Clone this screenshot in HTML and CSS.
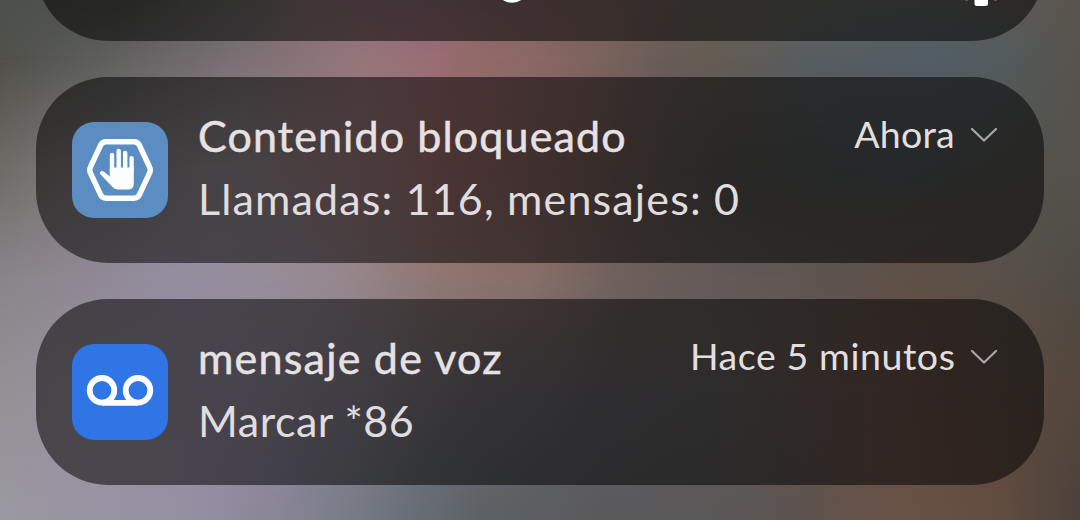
FILE: index.html
```html
<!DOCTYPE html>
<html lang="es">
<head>
<meta charset="utf-8">
<title>Notificaciones</title>
<link rel="stylesheet" href="styles.css">
</head>
<body>
<div class="screen">
  <div class="wall wall-1"></div>
  <div class="wall wall-2"></div>
  <div class="wall wall-3"></div>
  <div class="wall wall-4"></div>
  <div class="wall wall-5"></div>
  <div class="wall wall-6"></div>
  <main class="shade">
    <section class="card card-cut">
      <svg class="cut-marks" width="1008" height="12" viewBox="36 0 1008 12">
        <ellipse cx="512" cy="-4" rx="11" ry="6.8" fill="#fff"/>
        <rect x="974.5" y="-6" width="13.5" height="12" rx="2.5" fill="#fff"/>
        <path d="M965.5 0h2M994.500 0h2" stroke="#aaa" stroke-width="1"/>
      </svg>
    </section>
    <section class="card">
      <svg class="app-icon" viewBox="0 0 96 96">
        <rect width="96" height="96" rx="22" fill="#5b8cc2"/>
        <path d="M34 19.800H62Q65.500 19.800 67.200 22.800L77.300 44.500Q79.300 48 77.300 51.500L67.200 73.200Q65.500 76.200 62 76.200H34Q30.500 76.200 28.800 73.200L18.700 51.500Q16.700 48 18.700 44.500L28.800 22.800Q30.500 19.800 34 19.800Z" fill="none" stroke="#fcfeff" stroke-width="5.400"/>
        <path d="M40 33V50M46.700 29V50M53.200 31V50M59.600 36.300V50" fill="none" stroke="#fcfeff" stroke-width="4.400" stroke-linecap="round"/>
        <path d="M37.800 45.500H61.800V62Q61.800 67.400 56.500 67.400H45.500Q42.500 67.400 40.500 65L28.600 52.500C26.800 50.200 29.500 47.800 31.800 49.500L37.800 54.500Z" fill="#fcfeff"/>
      </svg>
      <div class="content">
        <header class="head">
          <h2 class="title"><span class="t1">Contenido bloqueado</span></h2>
          <time class="when w1">Ahora</time>
          <svg class="chevron" viewBox="0 0 28 16"><path d="M2 2L14 13.500L26 2"/></svg>
        </header>
        <p class="body b1">Llamadas: 116, mensajes: 0</p>
      </div>
    </section>
    <section class="card">
      <svg class="app-icon" viewBox="0 0 96 96">
        <rect width="96" height="96" rx="22" fill="#2f75e5"/>
        <g fill="none" stroke="#fcfeff" stroke-width="5.800">
          <circle cx="30" cy="46.300" r="12.300"/>
          <circle cx="66" cy="46.300" r="12.300"/>
          <path d="M30 58.900H66"/>
        </g>
      </svg>
      <div class="content">
        <header class="head">
          <h2 class="title"><span class="t2">mensaje de voz</span></h2>
          <time class="when w2">Hace 5 minutos</time>
          <svg class="chevron" viewBox="0 0 28 16"><path d="M2 2L14 13.500L26 2"/></svg>
        </header>
        <p class="body b2">Marcar *86</p>
      </div>
    </section>
  </main>
</div>
</body>
</html>
```

FILE: styles.css
```css
* { box-sizing: border-box; }
body { margin: 0; background: #555; font-family: Lato, "Open Sans", sans-serif; }
.screen { display: grid; width: 1080px; height: 520px; overflow: hidden; }
.wall, .shade { grid-area: 1 / 1; min-height: 0; }

/* Wallpaper: horizontal colour bands faded into each other from top to bottom */
.wall-1 { background: linear-gradient(90deg, rgb(76,80,76) 0, rgb(80,80,78) 120px, rgb(105,105,102) 240px, rgb(136,112,115) 310px, rgb(140,108,122) 400px, rgb(125,100,98) 540px, rgb(118,96,91) 620px, rgb(100,96,88) 720px, rgb(94,97,94) 840px, rgb(92,92,90) 960px, rgb(92,86,78) 1080px); }
.wall-2 {
  background: linear-gradient(90deg, rgb(80,80,72) 0, rgb(88,89,86) 60px, rgb(98,98,97) 120px, rgb(124,112,117) 240px, rgb(148,118,122) 360px, rgb(154,108,114) 440px, rgb(146,106,104) 480px, rgb(138,103,102) 540px, rgb(122,99,92) 600px, rgb(106,92,88) 660px, rgb(99,92,83) 720px, rgb(88,93,95) 800px, rgb(82,93,101) 930px, rgb(82,92,93) 1000px, rgb(88,84,76) 1080px);
  mask-image: linear-gradient(transparent 0, #000 59px);
}
.wall-3 {
  background: linear-gradient(90deg, rgb(110,108,102) 0, rgb(125,119,119) 60px, rgb(148,142,147) 220px, rgb(158,125,129) 360px, rgb(158,113,113) 430px, rgb(133,100,96) 540px, rgb(98,88,84) 660px, rgb(84,84,82) 740px, rgb(80,86,88) 900px, rgb(83,83,80) 1000px, rgb(84,82,74) 1080px);
  mask-image: linear-gradient(transparent 59px, #000 170px);
}
.wall-4 {
  background: linear-gradient(90deg, rgb(138,133,138) 0, rgb(143,135,145) 60px, rgb(148,141,160) 180px, rgb(149,140,152) 270px, rgb(150,136,142) 340px, rgb(142,118,114) 440px, rgb(136,111,106) 530px, rgb(110,96,92) 620px, rgb(100,90,88) 720px, rgb(94,84,78) 840px, rgb(96,80,70) 920px, rgb(88,80,73) 1000px, rgb(80,76,69) 1080px);
  mask-image: linear-gradient(transparent 170px, #000 281px);
}
.wall-5 {
  background: linear-gradient(90deg, rgb(148,144,150) 0, rgb(152,144,158) 60px, rgb(150,142,162) 240px, rgb(133,127,140) 360px, rgb(112,108,114) 480px, rgb(98,95,99) 600px, rgb(95,93,95) 720px, rgb(101,87,83) 800px, rgb(104,81,73) 900px, rgb(91,75,65) 1000px, rgb(85,71,61) 1080px);
  mask-image: linear-gradient(transparent 281px, #000 392px);
}
.wall-6 {
  background: linear-gradient(90deg, rgb(154,152,160) 0, rgb(152,147,163) 120px, rgb(148,142,162) 200px, rgb(136,133,150) 280px, rgb(118,122,132) 360px, rgb(102,109,117) 420px, rgb(94,98,102) 480px, rgb(90,90,93) 600px, rgb(90,87,87) 720px, rgb(94,84,80) 800px, rgb(106,82,70) 900px, rgb(98,76,64) 1000px, rgb(74,66,60) 1080px);
  mask-image: linear-gradient(transparent 392px, #000 505px);
}

.shade { z-index: 1; display: flex; flex-direction: column; gap: 36px; padding: 0 36px; margin-top: -145px; }
.card { display: flex; flex: none; align-items: center; height: 186px; padding: 0 46px 0 36px; border-radius: 72px; background: rgba(0,0,0,.52); }
.card-cut { align-items: flex-start; padding: 145px 0 0; }
.cut-marks { display: block; }
.app-icon { flex: none; width: 96px; height: 96px; margin-right: 30px; }
.content { flex: 1; min-width: 0; height: 132px; }
.head { display: flex; height: 63px; align-items: center; }
.title { flex: 1; margin: 0; color: #e6e2e3; font-size: 43px; font-weight: 400; line-height: 63px; white-space: nowrap; -webkit-text-stroke: .5px #e6e2e3; }
.when { color: #e2dfdf; font-size: 37.500px; line-height: 60px; height: 63px; white-space: nowrap; }
.t1 { letter-spacing: 1.12px; }
.t2 { letter-spacing: 1.22px; }
.b1 { letter-spacing: 1.15px; }
.b2 { letter-spacing: .5px; }
.w1 { letter-spacing: .25px; }
.w2 { letter-spacing: .57px; margin-right: -.5px; }
.chevron { flex: none; width: 28px; height: 16px; margin: 0 0 2px 15px; }
.chevron path { fill: none; stroke: #aaa8a7; stroke-width: 2.200; stroke-linecap: round; stroke-linejoin: round; }
.body { margin: 0; color: #e0dddf; font-size: 43px; line-height: 63px; white-space: nowrap; }
```
